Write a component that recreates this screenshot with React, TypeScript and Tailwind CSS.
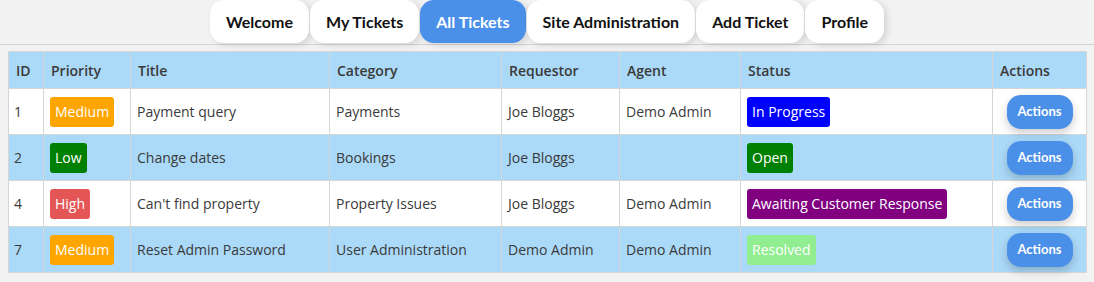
import React from "react";

const tabs = ["Welcome", "My Tickets", "All Tickets", "Site Administration", "Add Ticket", "Profile"];

type Row = {
  id: string;
  priority: string;
  title: string;
  category: string;
  requestor: string;
  agent: string;
  status: string;
};

const rows: Row[] = [
  { id: "1", priority: "Medium", title: "Payment query", category: "Payments", requestor: "Joe Bloggs", agent: "Demo Admin", status: "In Progress" },
  { id: "2", priority: "Low", title: "Change dates", category: "Bookings", requestor: "Joe Bloggs", agent: "", status: "Open" },
  { id: "4", priority: "High", title: "Can't find property", category: "Property Issues", requestor: "Joe Bloggs", agent: "Demo Admin", status: "Awaiting Customer Response" },
  { id: "7", priority: "Medium", title: "Reset Admin Password", category: "User Administration", requestor: "Demo Admin", agent: "Demo Admin", status: "Resolved" },
];

const priorityClass: Record<string, string> = {
  Medium: "bg-[#ffa500]",
  Low: "bg-[#008000]",
  High: "bg-[#e45656]",
};

const statusClass: Record<string, string> = {
  "In Progress": "bg-[#0000ff]",
  Open: "bg-[#008000]",
  "Awaiting Customer Response": "bg-[#800080]",
  Resolved: "bg-[#90ee90]",
};

const headers: { label: string; w: string }[] = [
  { label: "ID", w: "w-[35px]" },
  { label: "Priority", w: "w-[87px]" },
  { label: "Title", w: "w-[199px]" },
  { label: "Category", w: "w-[172px]" },
  { label: "Requestor", w: "w-[118px]" },
  { label: "Agent", w: "w-[121px]" },
  { label: "Status", w: "w-[252px]" },
  { label: "Actions", w: "w-[94px]" },
];

export default function App() {
  return (
    <div className="min-h-[282px] bg-[#f2f2f2] font-['Open_Sans',sans-serif]">
      <nav className="flex justify-center gap-[1px] border-b border-[#d4d4d4] h-[45px]">
        {tabs.map((t) => (
          <div
            key={t}
            className={
              "h-[43px] px-4 flex items-center rounded-[14px] text-[16px] font-bold font-['Lato',sans-serif] shadow-[3px_2px_7px_rgba(0,0,0,0.13)] " +
              (t === "All Tickets" ? "bg-[#4a8fe8] text-white" : "bg-white text-[#111]")
            }
          >
            {t}
          </div>
        ))}
      </nav>
      <div className="px-2 pt-[6px]">
        <table className="table-fixed w-[1078px] border-collapse border border-[#d6d6d6] text-[14px]">
          <thead>
            <tr className="bg-[#abd9f8] h-[37px]">
              {headers.map((h) => (
                <th
                  key={h.label}
                  className={h.w + " border border-[#d6d6d6] px-[7px] text-left font-semibold text-[#3a3a3a]"}
                >
                  {h.label}
                </th>
              ))}
            </tr>
          </thead>
          <tbody>
            {rows.map((r, i) => (
              <tr key={r.id} className={(i % 2 === 0 ? "bg-white" : "bg-[#abd9f8]") + " h-[46px] text-[#3a3a3a]"}>
                <td className="border border-[#d6d6d6] px-[5px]">{r.id}</td>
                <td className="border border-[#d6d6d6] px-[6px]">
                  <span className={priorityClass[r.priority] + " inline-flex items-center h-[30px] px-[5px] rounded-[3px] text-white"}>
                    {r.priority}
                  </span>
                </td>
                <td className="border border-[#d6d6d6] px-[6px]">{r.title}</td>
                <td className="border border-[#d6d6d6] px-[6px]">{r.category}</td>
                <td className="border border-[#d6d6d6] px-[6px]">{r.requestor}</td>
                <td className="border border-[#d6d6d6] px-[6px]">{r.agent}</td>
                <td className="border border-[#d6d6d6] px-[6px]">
                  <span className={statusClass[r.status] + " inline-flex items-center h-[30px] px-[5px] rounded-[3px] text-white"}>
                    {r.status}
                  </span>
                </td>
                <td className="border border-[#d6d6d6] text-center">
                  <button className="h-[34px] w-[66px] rounded-[14px] bg-[#4a8fe8] text-white text-[13px] font-bold font-['Lato',sans-serif] shadow-[0_4px_10px_rgba(0,0,0,0.2)]">
                    Actions
                  </button>
                </td>
              </tr>
            ))}
          </tbody>
        </table>
      </div>
    </div>
  );
}
